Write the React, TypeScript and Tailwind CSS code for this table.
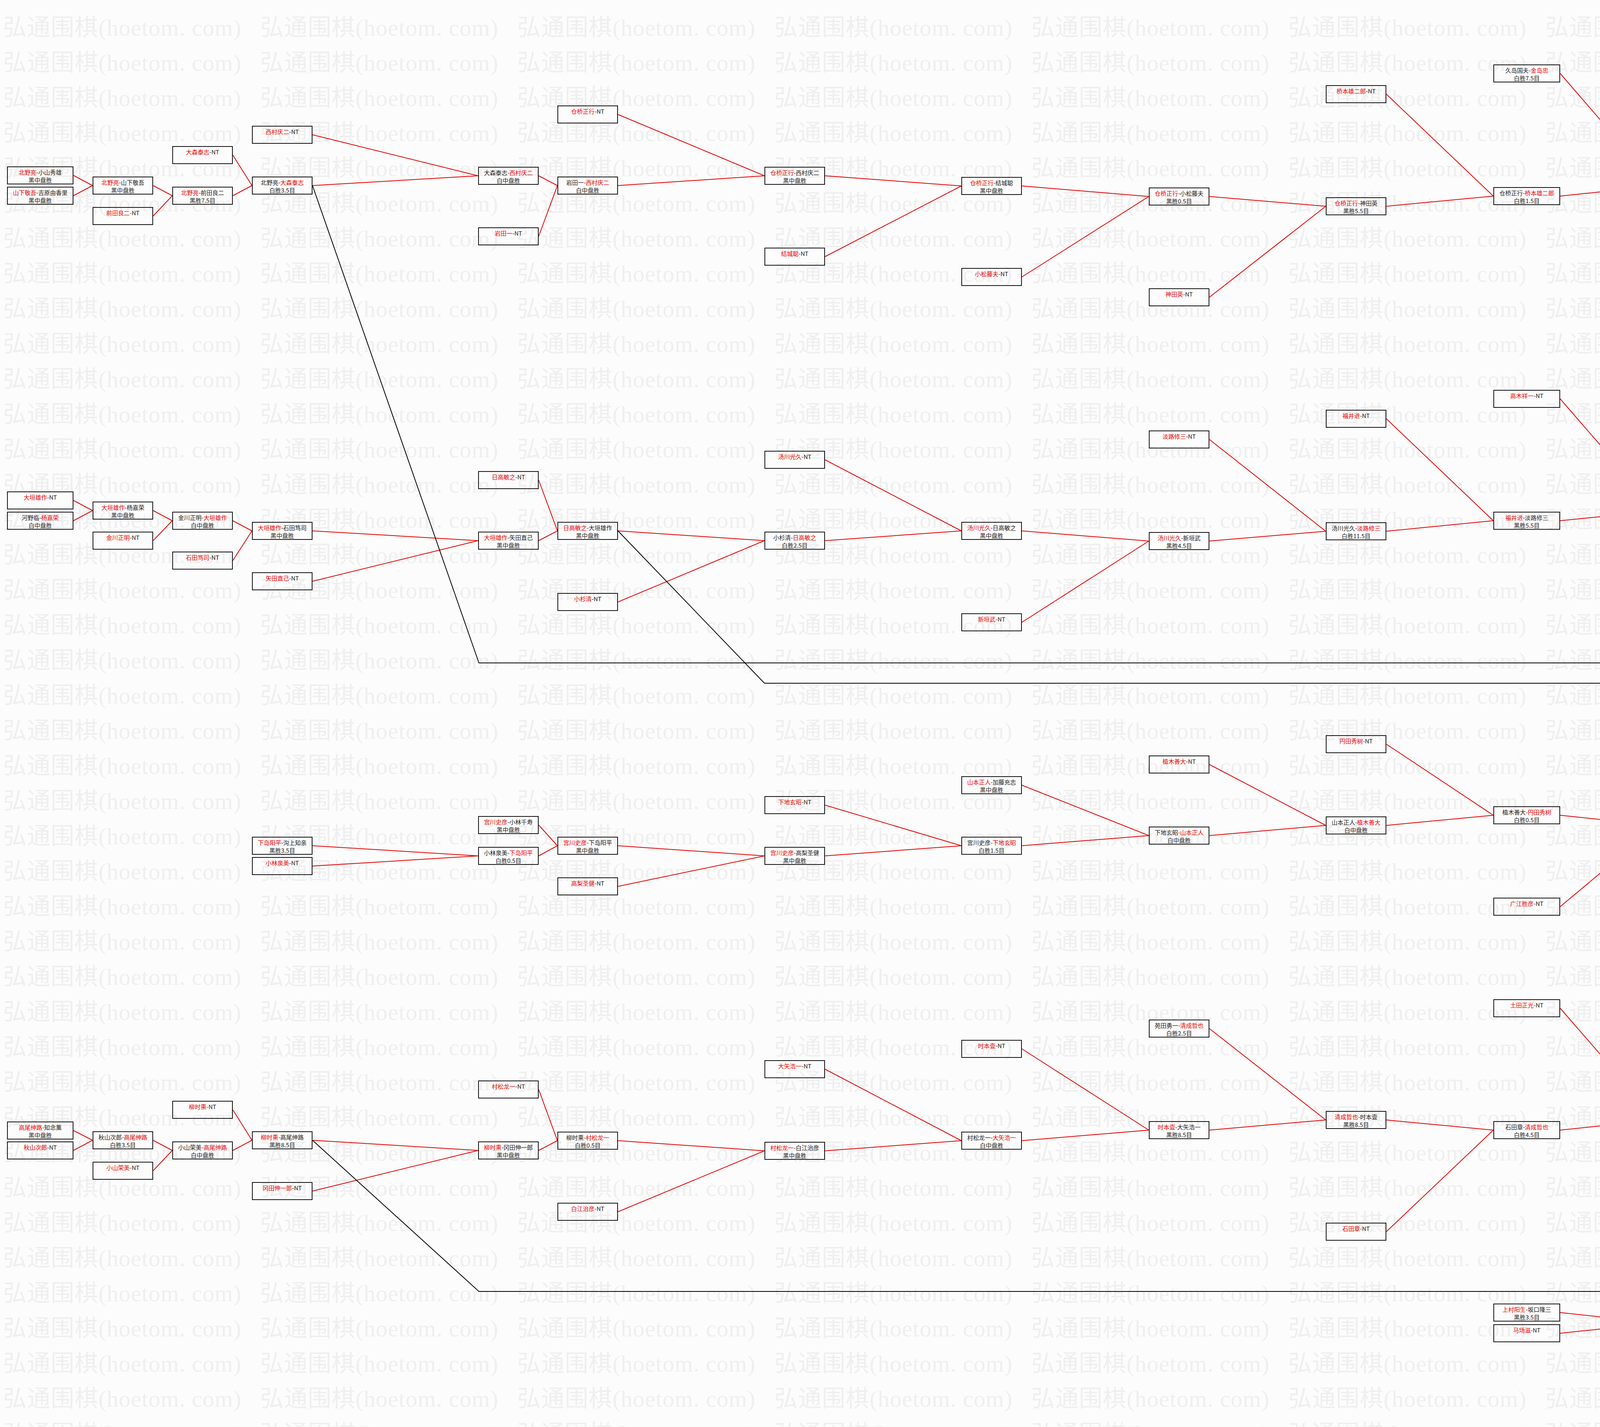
import React from "react";

type Box = { id: string; x: number; y: number; w?: number; a: string; b?: string; win?: 0 | 1; r?: string };

const boxes: Box[] = [
  { id: "B1", x: 18, y: 426, w: 170, a: "北野亮", b: "小山秀雄", win: 0, r: "黑中盘胜" },
  { id: "B2", x: 18, y: 478, w: 170, a: "山下敬吾", b: "吉原由香里", win: 0, r: "黑中盘胜" },
  { id: "B3", x: 237, y: 452, a: "北野亮", b: "山下敬吾", win: 0, r: "黑中盘胜" },
  { id: "B4", x: 237, y: 530, a: "前田良二" },
  { id: "B5", x: 441, y: 478, a: "北野亮", b: "前田良二", win: 0, r: "黑胜7.5目" },
  { id: "B6", x: 441, y: 374, a: "大森泰志" },
  { id: "B7", x: 645, y: 452, a: "北野亮", b: "大森泰志", win: 1, r: "白胜3.5目" },
  { id: "B8", x: 645, y: 322, a: "西村庆二" },
  { id: "B9", x: 1224, y: 427, a: "大森泰志", b: "西村庆二", win: 1, r: "白中盘胜" },
  { id: "B10", x: 1224, y: 582, a: "岩田一" },
  { id: "B11", x: 1427, y: 452, a: "岩田一", b: "西村庆二", win: 1, r: "白中盘胜" },
  { id: "B12", x: 1427, y: 270, a: "仓桥正行" },
  { id: "B13", x: 1957, y: 427, a: "仓桥正行", b: "西村庆二", win: 0, r: "黑中盘胜" },
  { id: "B14", x: 1957, y: 634, a: "结城聪" },
  { id: "B15", x: 2461, y: 453, a: "仓桥正行", b: "结城聪", win: 0, r: "黑中盘胜" },
  { id: "B16", x: 2461, y: 686, a: "小松藤夫" },
  { id: "B17", x: 2941, y: 480, a: "仓桥正行", b: "小松藤夫", win: 0, r: "黑胜0.5目" },
  { id: "B18", x: 2941, y: 738, a: "神田英" },
  { id: "B19", x: 3394, y: 505, a: "仓桥正行", b: "神田英", win: 0, r: "黑胜5.5目" },
  { id: "B20", x: 3394, y: 218, a: "桥本雄二郎" },
  { id: "B21", x: 3823, y: 479, w: 171, a: "仓桥正行", b: "桥本雄二郎", win: 1, r: "白胜1.5目" },
  { id: "B22", x: 3823, y: 165, w: 171, a: "久岛国夫", b: "金岛忠", win: 1, r: "白胜7.5目" },
  { id: "B23", x: 4243, y: 453, a: "桥本雄二郎", b: "金岛忠", win: 1, r: "白胜1.5目" },
  { id: "B24", x: 4243, y: 114, a: "黑泽忠尚", b: "本田邦久", win: 1, r: "白胜0.5目" },
  { id: "B25", x: 4622, y: 426, a: "本田邦久", b: "金岛忠", win: 0, r: "黑中盘胜" },
  { id: "B26", x: 4622, y: 790, a: "桥本昌二" },
  { id: "B27", x: 4976, y: 452, a: "桥本昌二", b: "本田邦久", win: 1, r: "白胜11.5目" },
  { id: "B28", x: 4976, y: 62, a: "小林觉" },
  { id: "B29", x: 5305, y: 426, a: "小林觉", b: "本田邦久", win: 0, r: "黑胜11.5目" },
  { id: "B30", x: 5305, y: 10, a: "山田规三生" },
  { id: "B31", x: 5610, y: 400, a: "山田规三生", b: "小林觉", win: 0, r: "黑胜4.5目" },
  { id: "B32", x: 5888, y: 816, w: 171, a: "小林光一", b: "山田规三生", win: 1, r: "白胜2.5目" },
  { id: "B33", x: 6108, y: 868, a: "北野亮", b: "山田规三生", win: 1, r: "白中盘胜" },
  { id: "B34", x: 5888, y: 1700, w: 171, a: "北野亮", b: "大垣雄作", win: 0, r: "黑胜0.5目" },
  { id: "B35", x: 6313, y: 1805, w: 169, a: "森田道博", b: "山田规三生", win: 1, r: "白中盘胜" },
  { id: "C1", x: 18, y: 1258, w: 170, a: "大垣雄作" },
  { id: "C2", x: 18, y: 1310, w: 170, a: "河野临", b: "杨嘉荣", win: 1, r: "白中盘胜" },
  { id: "C3", x: 237, y: 1284, a: "大垣雄作", b: "杨嘉荣", win: 0, r: "黑中盘胜" },
  { id: "C4", x: 237, y: 1361, a: "金川正明" },
  { id: "C5", x: 441, y: 1310, a: "金川正明", b: "大垣雄作", win: 1, r: "白中盘胜" },
  { id: "C6", x: 441, y: 1412, a: "石田笃司" },
  { id: "C7", x: 645, y: 1336, a: "大垣雄作", b: "石田笃司", win: 0, r: "黑中盘胜" },
  { id: "C8", x: 645, y: 1465, a: "矢田直己" },
  { id: "C9", x: 1224, y: 1361, a: "大垣雄作", b: "矢田直己", win: 0, r: "黑中盘胜" },
  { id: "C10", x: 1224, y: 1206, a: "日高敏之" },
  { id: "C11", x: 1427, y: 1336, a: "日高敏之", b: "大垣雄作", win: 0, r: "黑中盘胜" },
  { id: "C12", x: 1427, y: 1518, a: "小杉清" },
  { id: "C13", x: 1957, y: 1361, a: "小杉清", b: "日高敏之", win: 1, r: "白胜2.5目" },
  { id: "C14", x: 1957, y: 1154, a: "汤川光久" },
  { id: "C15", x: 2461, y: 1336, a: "汤川光久", b: "日高敏之", win: 0, r: "黑中盘胜" },
  { id: "C16", x: 2461, y: 1570, a: "新垣武" },
  { id: "C17", x: 2941, y: 1362, a: "汤川光久", b: "新垣武", win: 0, r: "黑胜4.5目" },
  { id: "C18", x: 2941, y: 1102, a: "淡路修三" },
  { id: "C19", x: 3394, y: 1337, a: "汤川光久", b: "淡路修三", win: 1, r: "白胜11.5目" },
  { id: "C20", x: 3394, y: 1049, a: "福井进" },
  { id: "C21", x: 3823, y: 1310, w: 171, a: "福井进", b: "淡路修三", win: 0, r: "黑胜5.5目" },
  { id: "C22", x: 3823, y: 998, w: 171, a: "高木祥一" },
  { id: "C23", x: 4243, y: 1285, a: "高木祥一", b: "福井进", win: 0, r: "黑中盘胜" },
  { id: "C24", x: 4243, y: 946, a: "宫本义久", b: "石榑郁郎", win: 1, r: "白胜7.5目" },
  { id: "C25", x: 4622, y: 1255, a: "石榑郁郎", b: "高木祥一", win: 0, r: "黑胜1.5目" },
  { id: "C26", x: 4622, y: 894, a: "杉内雅男" },
  { id: "C27", x: 4976, y: 1232, a: "石榑郁郎", b: "杉内雅男", win: 1, r: "白胜1.5目" },
  { id: "C28", x: 4976, y: 843, a: "小林光一" },
  { id: "C29", x: 5305, y: 1207, a: "杉内雅男", b: "小林光一", win: 1, r: "白中盘胜" },
  { id: "C30", x: 5305, y: 1622, a: "赵治勋" },
  { id: "C31", x: 5610, y: 1232, a: "赵治勋", b: "小林光一", win: 1, r: "白中盘胜" },
  { id: "D1", x: 645, y: 2142, a: "下岛阳平", b: "沟上知亲", win: 0, r: "黑胜3.5目" },
  { id: "D2", x: 645, y: 2194, a: "小林泉美" },
  { id: "D3", x: 1224, y: 2168, a: "小林泉美", b: "下岛阳平", win: 1, r: "白胜0.5目" },
  { id: "D4", x: 1224, y: 2089, a: "宫川史彦", b: "小林千寿", win: 0, r: "黑中盘胜" },
  { id: "D5", x: 1427, y: 2142, a: "宫川史彦", b: "下岛阳平", win: 0, r: "黑中盘胜" },
  { id: "D6", x: 1427, y: 2246, a: "高梨圣健" },
  { id: "D7", x: 1957, y: 2168, a: "宫川史彦", b: "高梨圣健", win: 0, r: "黑中盘胜" },
  { id: "D8", x: 1957, y: 2038, a: "下地玄昭" },
  { id: "D9", x: 2461, y: 2142, a: "宫川史彦", b: "下地玄昭", win: 1, r: "白胜1.5目" },
  { id: "D10", x: 2461, y: 1987, a: "山本正人", b: "加藤充志", win: 0, r: "黑中盘胜" },
  { id: "D11", x: 2941, y: 2116, a: "下地玄昭", b: "山本正人", win: 1, r: "白中盘胜" },
  { id: "D12", x: 2941, y: 1934, a: "植木善大" },
  { id: "D13", x: 3394, y: 2090, a: "山本正人", b: "植木善大", win: 1, r: "白中盘胜" },
  { id: "D14", x: 3394, y: 1882, a: "円田秀树" },
  { id: "D15", x: 3823, y: 2064, w: 171, a: "植木善大", b: "円田秀树", win: 1, r: "白胜0.5目" },
  { id: "D16", x: 3823, y: 2298, w: 171, a: "广江胜彦" },
  { id: "D17", x: 4243, y: 2090, a: "广江胜彦", b: "円田秀树", win: 1, r: "白中盘胜" },
  { id: "D18", x: 4243, y: 1830, a: "森田道博" },
  { id: "D19", x: 4622, y: 2065, a: "森田道博", b: "円田秀树", win: 0, r: "黑中盘胜" },
  { id: "D20", x: 4622, y: 2349, a: "大渊盛人" },
  { id: "D21", x: 4976, y: 2091, a: "森田道博", b: "大渊盛人", win: 0, r: "黑中盘胜" },
  { id: "D22", x: 4976, y: 2403, a: "郡寿男" },
  { id: "D23", x: 4976, y: 2454, a: "加藤正夫" },
  { id: "D24", x: 5305, y: 2117, a: "郡寿男", b: "森田道博", win: 1, r: "白胜2.5目" },
  { id: "D25", x: 5305, y: 1778, a: "上村阳生", b: "王铭琬", win: 0, r: "黑胜0.5目" },
  { id: "D26", x: 5610, y: 2091, a: "森田道博", b: "王铭琬", win: 1, r: "白胜6.5目" },
  { id: "D27", x: 5888, y: 2505, w: 171, a: "森田道博", b: "加藤正夫", win: 0, r: "黑胜14.5目" },
  { id: "D28", x: 6108, y: 2687, a: "森田道博", b: "高尾绅路", win: 0, r: "黑中盘胜" },
  { id: "E1", x: 18, y: 2871, w: 170, a: "高尾绅路", b: "知念薰", win: 0, r: "黑中盘胜" },
  { id: "E2", x: 18, y: 2922, w: 170, a: "秋山次郎" },
  { id: "E3", x: 237, y: 2896, a: "秋山次郎", b: "高尾绅路", win: 1, r: "白胜3.5目" },
  { id: "E4", x: 237, y: 2974, a: "小山荣美" },
  { id: "E5", x: 441, y: 2922, a: "小山荣美", b: "高尾绅路", win: 1, r: "白中盘胜" },
  { id: "E6", x: 441, y: 2818, a: "柳时熏" },
  { id: "E7", x: 645, y: 2896, a: "柳时熏", b: "高尾绅路", win: 0, r: "黑胜8.5目" },
  { id: "E8", x: 645, y: 3026, a: "冈田伸一郎" },
  { id: "E9", x: 1224, y: 2922, a: "柳时熏", b: "冈田伸一郎", win: 0, r: "黑中盘胜" },
  { id: "E10", x: 1224, y: 2766, a: "村松龙一" },
  { id: "E11", x: 1427, y: 2897, a: "柳时熏", b: "村松龙一", win: 1, r: "白胜0.5目" },
  { id: "E12", x: 1427, y: 3079, a: "白江治彦" },
  { id: "E13", x: 1957, y: 2923, a: "村松龙一", b: "白江治彦", win: 0, r: "黑中盘胜" },
  { id: "E14", x: 1957, y: 2714, a: "大矢浩一" },
  { id: "E15", x: 2461, y: 2897, a: "村松龙一", b: "大矢浩一", win: 1, r: "白中盘胜" },
  { id: "E16", x: 2461, y: 2662, a: "时本壹" },
  { id: "E17", x: 2941, y: 2870, a: "时本壹", b: "大矢浩一", win: 0, r: "黑胜8.5目" },
  { id: "E18", x: 2941, y: 2610, a: "苑田勇一", b: "清成哲也", win: 1, r: "白胜2.5目" },
  { id: "E19", x: 3394, y: 2844, a: "清成哲也", b: "时本壹", win: 0, r: "黑胜8.5目" },
  { id: "E20", x: 3394, y: 3130, a: "石田章" },
  { id: "E21", x: 3823, y: 2870, w: 171, a: "石田章", b: "清成哲也", win: 1, r: "白胜4.5目" },
  { id: "E22", x: 3823, y: 2558, w: 171, a: "土田正光" },
  { id: "E23", x: 4243, y: 2844, a: "土田正光", b: "清成哲也", win: 0, r: "黑胜11.5目" },
  { id: "E24", x: 4243, y: 2506, a: "石井邦生", b: "春山勇", win: 1, r: "白中盘胜" },
  { id: "E25", x: 4622, y: 2818, a: "春山勇", b: "土田正光", win: 0, r: "黑中盘胜" },
  { id: "E26", x: 4622, y: 3182, a: "曲励起" },
  { id: "E27", x: 4976, y: 2843, a: "春山勇", b: "曲励起", win: 0, r: "黑中盘胜" },
  { id: "E28", x: 5305, y: 2818, a: "加藤正夫", b: "春山勇", win: 0, r: "黑中盘胜" },
  { id: "E29", x: 5305, y: 3233, a: "彦坂直人" },
  { id: "E30", x: 5610, y: 2843, a: "加藤正夫", b: "彦坂直人", win: 0, r: "黑胜2.5目" },
  { id: "F1", x: 3823, y: 3337, w: 171, a: "上村阳生", b: "坂口隆三", win: 0, r: "黑胜3.5目" },
  { id: "F2", x: 3823, y: 3390, w: 171, a: "马场滋" },
  { id: "F3", x: 4243, y: 3364, a: "上村阳生", b: "马场滋", win: 0, r: "黑中盘胜" },
  { id: "F4", x: 4243, y: 3442, a: "早濑弘" },
  { id: "F5", x: 4622, y: 3390, a: "上村阳生", b: "早濑弘", win: 0, r: "黑中盘胜" },
  { id: "F6", x: 4622, y: 3494, a: "羽根泰正" },
  { id: "F7", x: 4976, y: 3416, a: "上村阳生", b: "羽根泰正", win: 0, r: "黑中盘胜" },
  { id: "F8", x: 4976, y: 3545, a: "工藤纪夫" },
  { id: "F9", x: 5305, y: 3442, a: "工藤纪夫", b: "上村阳生", win: 1, r: "白胜6.5目" },
  { id: "F10", x: 5305, y: 3597, a: "大竹英雄" },
  { id: "F11", x: 5610, y: 3468, a: "上村阳生", b: "大竹英雄", win: 0, r: "黑中盘胜" },
  { id: "F12", x: 5888, y: 3443, w: 171, a: "高尾绅路", b: "上村阳生", win: 0, r: "黑中盘胜" },
];

const edges: [string, string, ("k" | "r")?][] = [
  ["B1", "B3"], ["B2", "B3"], ["B3", "B5"], ["B4", "B5"], ["B5", "B7"], ["B6", "B7"],
  ["B7", "B9"], ["B8", "B9"], ["B9", "B11"], ["B10", "B11"], ["B11", "B13"], ["B12", "B13"],
  ["B13", "B15"], ["B14", "B15"], ["B15", "B17"], ["B16", "B17"], ["B17", "B19"], ["B18", "B19"],
  ["B19", "B21"], ["B20", "B21"], ["B21", "B23"], ["B22", "B23"], ["B23", "B25"], ["B24", "B25"],
  ["B25", "B27"], ["B26", "B27"], ["B27", "B29"], ["B28", "B29"], ["B29", "B31"], ["B30", "B31"],
  ["B31", "B32"], ["C31", "B32"], ["B32", "B33"], ["B34", "B33"], ["B33", "B35"], ["D28", "B35"],
  ["C1", "C3"], ["C2", "C3"], ["C3", "C5"], ["C4", "C5"], ["C5", "C7"], ["C6", "C7"],
  ["C7", "C9"], ["C8", "C9"], ["C9", "C11"], ["C10", "C11"], ["C11", "C13"], ["C12", "C13"],
  ["C13", "C15"], ["C14", "C15"], ["C15", "C17"], ["C16", "C17"], ["C17", "C19"], ["C18", "C19"],
  ["C19", "C21"], ["C20", "C21"], ["C21", "C23"], ["C22", "C23"], ["C23", "C25"], ["C24", "C25"],
  ["C25", "C27"], ["C26", "C27"], ["C27", "C29"], ["C28", "C29"], ["C29", "C31"], ["C30", "C31"],
  ["D1", "D3"], ["D2", "D3"], ["D3", "D5"], ["D4", "D5"], ["D5", "D7"], ["D6", "D7"],
  ["D7", "D9"], ["D8", "D9"], ["D9", "D11"], ["D10", "D11"], ["D11", "D13"], ["D12", "D13"],
  ["D13", "D15"], ["D14", "D15"], ["D15", "D17"], ["D16", "D17"], ["D17", "D19"], ["D18", "D19"],
  ["D19", "D21"], ["D20", "D21"], ["D21", "D24"], ["D22", "D24"], ["D24", "D26"],
  ["D25", "D26", "k"], ["D26", "D27", "k"], ["E30", "D27"], ["D27", "D28"], ["F12", "D28"],
  ["D23", "E28"],
  ["E1", "E3"], ["E2", "E3"], ["E3", "E5"], ["E4", "E5"], ["E5", "E7"], ["E6", "E7"],
  ["E7", "E9"], ["E8", "E9"], ["E9", "E11"], ["E10", "E11"], ["E11", "E13"], ["E12", "E13"],
  ["E13", "E15"], ["E14", "E15"], ["E15", "E17"], ["E16", "E17"], ["E17", "E19"], ["E18", "E19"],
  ["E19", "E21"], ["E20", "E21"], ["E21", "E23"], ["E22", "E23"], ["E23", "E25"], ["E24", "E25"],
  ["E25", "E27"], ["E26", "E27"], ["E27", "E28"], ["E28", "E30"], ["E29", "E30"],
  ["F1", "F3"], ["F2", "F3"], ["F3", "F5"], ["F4", "F5"], ["F5", "F7"], ["F6", "F7"],
  ["F7", "F9"], ["F8", "F9"], ["F9", "F11"], ["F10", "F11"], ["F11", "F12"],
];

const byId: Record<string, Box> = {};
boxes.forEach((b) => (byId[b.id] = b));
const bw = (b: Box) => b.w ?? 155;
const H = 46;
const right = (id: string): [number, number] => {
  const b = byId[id];
  return [b.x + bw(b), b.y + H / 2];
};
const left = (id: string): [number, number] => {
  const b = byId[id];
  return [b.x, b.y + H / 2];
};

const blackPaths: [number, number][][] = [
  [right("B7"), [1226, 1697], [5763, 1697], left("B34")],
  [right("C11"), [1957, 1749], [5763, 1749], left("B34")],
  [right("E7"), [1226, 3306], [5763, 3306], left("F12")],
];

const RED = "#e60000";

function Name({ n, red }: { n: string; red: boolean }) {
  return red ? <span className="text-[#e60000]">{n}</span> : <span>{n}</span>;
}

function BoxView({ b }: { b: Box }) {
  return (
    <div
      className="absolute box-border h-[46px] border-2 border-[#111] pt-[3px] text-center text-[15px] leading-[20px] whitespace-nowrap text-[#1a1a1a] font-['Noto_Sans_CJK_SC',sans-serif]"
      style={{ left: b.x, top: b.y, width: bw(b) }}
    >
      <div>
        {b.b === undefined ? (
          <>
            <Name n={b.a} red />
            <span>-NT</span>
          </>
        ) : (
          <>
            <Name n={b.a} red={b.win === 0} />
            <span>-</span>
            <Name n={b.b} red={b.win === 1} />
          </>
        )}
      </div>
      <div>{b.r ?? ""}</div>
    </div>
  );
}

const rows = Array.from({ length: 41 }, (_, i) => i);
const cols = Array.from({ length: 9 }, (_, i) => i);

export default function App() {
  return (
    <div className="relative h-[3653px] w-[6493px] overflow-hidden bg-[#fcfcfc]">
      <div className="absolute inset-0 flex flex-col overflow-hidden pl-[8px] pt-[26px] text-[60px] leading-[90px] text-[#efefef] font-['Liberation_Serif','Noto_Sans_CJK_SC',serif] select-none">
        {rows.map((r) => (
          <div key={r} className="flex h-[90px] w-[6485px] shrink-0 overflow-hidden">
            {cols.map((c) => (
              <span key={c} className="w-[658px] shrink-0 whitespace-nowrap tracking-[1px]">
                弘通围棋(hoetom. com)
              </span>
            ))}
            <span className="min-w-0 flex-1 overflow-hidden whitespace-nowrap tracking-[1px]">弘通围棋(hoetom. com)</span>
          </div>
        ))}
      </div>
      <svg className="absolute left-0 top-0" width={6493} height={3653}>
        {edges.map(([f, t, c]) => {
          const [x1, y1] = right(f);
          const [x2, y2] = left(t);
          return (
            <line key={f + t} x1={x1} y1={y1} x2={x2} y2={y2} stroke={c === "k" ? "#000" : RED} strokeWidth={2} />
          );
        })}
        {blackPaths.map((p, i) => (
          <polyline key={i} points={p.map((q) => q.join(",")).join(" ")} fill="none" stroke="#000" strokeWidth={2} />
        ))}
      </svg>
      {boxes.map((b) => (
        <BoxView key={b.id} b={b} />
      ))}
    </div>
  );
}
